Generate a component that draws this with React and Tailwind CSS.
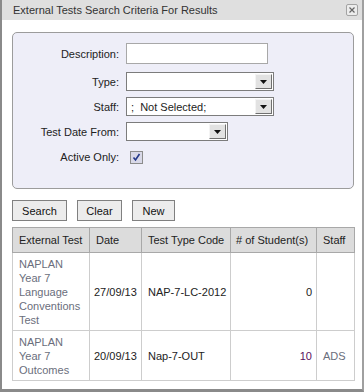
import React from 'react';

const rows = [
    { name: ['NAPLAN', 'Year 7', 'Language', 'Conventions', 'Test'], date: '27/09/13', code: 'NAP-7-LC-2012', count: '0', countColor: 'text-[#222]', staff: '' },
    { name: ['NAPLAN', 'Year 7', 'Outcomes'], date: '20/09/13', code: 'Nap-7-OUT', count: '10', countColor: 'text-[#5a1060]', staff: 'ADS' },
];

function DropArrow() {
    return (
        <div className="w-[17px] h-full flex items-center justify-center bg-[#e2e2e2] border-l border-t border-t-[#f4f4f4] border-l-[#f4f4f4] border-r border-b border-r-[#707070] border-b-[#707070]">
            <svg width="7" height="4" viewBox="0 0 7 4">
                <path d="M0 0 H7 L3.5 4 Z" fill="#111" />
            </svg>
        </div>
    );
}

function Select({ width, children }) {
    return (
        <div className={`${width} h-[19px] flex items-stretch bg-white border border-[#7c7c7c] p-px`}>
            <div className="flex-1 flex items-center pl-[3px] whitespace-pre text-[#222]">{children}</div>
            <DropArrow />
        </div>
    );
}

function Field({ label, children, className = '' }) {
    return (
        <div className={`flex items-center ${className}`}>
            <div className="w-[107px] text-right pr-px text-[#222]">{label}</div>
            <div className="ml-[6px]">{children}</div>
        </div>
    );
}

function Button({ width, children }) {
    return (
        <button className={`${width} h-[21px] bg-[#ececec] border border-[#808080] text-[#111] flex items-center justify-center`}>
            {children}
        </button>
    );
}

export default function App() {
    return (
        <div className="w-[364px] h-[392px] bg-white flex flex-col border-l-2 border-l-[#8a8a8a] border-r-2 border-r-[#a0a0a0] border-b-[3px] border-b-[#8a8a8a] font-['Liberation_Sans',Arial,sans-serif] text-[11px] leading-[14px] overflow-hidden">
            {/* Title bar */}
            <div className="h-[20px] shrink-0 bg-[#dfdfdf] flex items-center pl-[11px] pr-[4px]">
                <span className="text-[#333]">External Tests Search Criteria For Results</span>
                <div className="ml-auto w-[12px] h-[12px] border border-[#a3a3a3] rounded-[2px] bg-[#ececec] flex items-center justify-center">
                    <svg width="6" height="6" viewBox="0 0 6 6">
                        <path d="M0.5 0.5 L5.5 5.5 M5.5 0.5 L0.5 5.5" stroke="#666" strokeWidth="1.2" />
                    </svg>
                </div>
            </div>

            <div className="pl-[10px] pr-[8px]">
                {/* Criteria panel */}
                <div className="mt-[12px] w-[342px] rounded-[5px] border border-[#9c9c9c] bg-[#eeeef8] pt-[10px] pb-[24px]">
                    <Field label="Description:">
                        <div className="w-[142px] h-[21px] bg-white border border-[#a8a8a8]" />
                    </Field>
                    <Field label="Type:" className="mt-[8px]">
                        <Select width="w-[148px]" />
                    </Field>
                    <Field label="Staff:" className="mt-[6px]">
                        <Select width="w-[148px]">{';  Not Selected;'}</Select>
                    </Field>
                    <Field label="Test Date From:" className="mt-[6px]">
                        <Select width="w-[102px]" />
                    </Field>
                    <Field label="Active Only:" className="mt-[9px]">
                        <div className="ml-[4px] w-[13px] h-[13px] border border-[#8c8c8c] bg-[#d9d9e8] flex items-center justify-center">
                            <svg width="9" height="9" viewBox="0 0 9 9">
                                <path d="M1.5 4.5 L3.5 7 L7.5 1" stroke="#24388a" strokeWidth="1.6" fill="none" />
                            </svg>
                        </div>
                    </Field>
                </div>

                {/* Actions */}
                <div className="mt-[11px] flex gap-[10px]">
                    <Button width="w-[55px]">Search</Button>
                    <Button width="w-[45px]">Clear</Button>
                    <Button width="w-[43px]">New</Button>
                </div>

                {/* Results */}
                <table className="mt-[6px] w-[342px] table-fixed border-collapse border border-[#9a9a9a]">
                    <colgroup>
                        <col className="w-[77px]" />
                        <col className="w-[52px]" />
                        <col className="w-[89px]" />
                        <col className="w-[86px]" />
                        <col className="w-[38px]" />
                    </colgroup>
                    <thead>
                        <tr className="bg-[#dcdcdc] text-[#222]">
                            <th className="font-normal text-left px-[6px] py-[5px] border border-[#a8a8a8] whitespace-nowrap">External Test</th>
                            <th className="font-normal text-left px-[6px] py-[5px] border border-[#a8a8a8]">Date</th>
                            <th className="font-normal text-left px-[6px] py-[5px] border border-[#a8a8a8] whitespace-nowrap">Test Type Code</th>
                            <th className="font-normal text-left px-[5px] py-[5px] border border-[#a8a8a8] whitespace-nowrap"># of Student(s)</th>
                            <th className="font-normal text-left px-[6px] py-[5px] border border-[#a8a8a8]">Staff</th>
                        </tr>
                    </thead>
                    <tbody>
                        {rows.map((r, i) => (
                            <tr key={i}>
                                <td className="align-top px-[6px] pt-[4px] pb-[3px] border border-[#cdcdcd] text-[#6a6e7c]">
                                    {r.name.map((l, j) => <div key={j}>{l}</div>)}
                                </td>
                                <td className="px-[4px] border border-[#cdcdcd] text-[#222] whitespace-nowrap">{r.date}</td>
                                <td className="px-[6px] border border-[#cdcdcd] text-[#222] whitespace-nowrap">{r.code}</td>
                                <td className={`px-[4px] text-right border border-[#cdcdcd] ${r.countColor}`}>{r.count}</td>
                                <td className="px-[6px] border border-[#cdcdcd] text-[#6a6e7c]">{r.staff}</td>
                            </tr>
                        ))}
                    </tbody>
                </table>
            </div>
        </div>
    );
}
